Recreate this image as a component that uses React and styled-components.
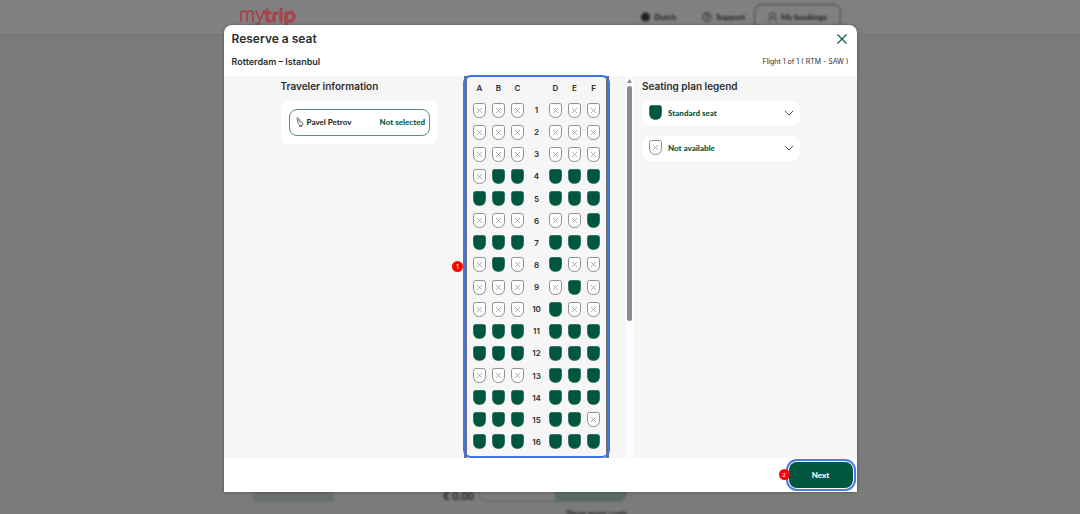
import React, {useState} from "react";
import styled, {createGlobalStyle} from "styled-components"

const GlobalStyle = createGlobalStyle`
    * {
        box-sizing: border-box;
    }
    body {
        margin: 0;
        background-color: #7b7b7b;
        color: #2b2d2e;
        font-family: "Inter", "Liberation Sans", sans-serif;
        font-size: 8px;
    }
    button {
        font-family: inherit;
        font-size: inherit;
        color: inherit;
        padding: 0;
        border: none;
        background: none;
        cursor: pointer;
    }
    h1, h2, p {
        margin: 0;
    }
`

const labelFont = `"Lato", "Liberation Sans", sans-serif`

const Page = styled.div`
    position: relative;
    display: flex;
    flex-direction: column;
    height: 100vh;
    overflow: hidden;
`
const SiteHeader = styled.header`
    height: 35px;
    padding: 0 239px;
    display: flex;
    justify-content: space-between;
    background-color: #808080;
    border-bottom: 1px solid #777;
    font-family: ${labelFont};
`
const Logo = styled.svg`
    width: 58px;
    height: 20px;
    margin-top: 7px;
    filter: blur(0.5px);
`
const SiteNav = styled.nav`
    display: flex;
    gap: 26px;
    margin-top: 4px;
    filter: blur(0.8px);
`
const NavLink = styled.a`
    display: flex;
    align-items: center;
    gap: 4px;
    height: 26px;
    padding: ${props=>props.$boxed ? "0 13px" : "0"};
    margin-left: ${props=>props.$boxed ? "-17px" : "0"};
    border: ${props=>props.$boxed ? "1px solid #444" : "none"};
    border-radius: 8px;
    color: #222;
    font-weight: 900;
    text-decoration: none;
`
const SiteBottom = styled.div`
    display: flex;
    align-items: flex-start;
    justify-content: space-between;
    height: 30px;
    margin-top: auto;
    padding: 0 453px 0 253px;
    font-family: ${labelFont};
`
const GrayBlock = styled.div`
    width: 81px;
    height: 18px;
    background-color: #6a6e6d;
    filter: blur(1px);
`
const PriceBlock = styled.div`
    display: flex;
    flex-direction: column;
    align-items: flex-end;
    filter: blur(1px);
    font-weight: 900;
`
const PriceRow = styled.div`
    display: flex;
    gap: 4px;
    font-size: 11px;
    line-height: 24px;
`
const PricePill = styled.div`
    width: 149px;
    height: 18px;
    border: 1px solid #626262;
    border-radius: 0 0 9px 9px;
    background: linear-gradient(90deg, transparent 52%, #566a62 52%);
`

const Overlay = styled.div`
    position: absolute;
    inset: 0;
    display: flex;
    justify-content: center;
    padding: 25px 0 22px;
`
const Modal = styled.section`
    display: flex;
    flex-direction: column;
    width: 100%;
    max-width: 633px;
    background-color: #fff;
    border-radius: 8px 8px 0 0;
    box-shadow: 0 0 3px rgba(0, 0, 0, 0.4);
`
const ModalHeader = styled.header`
    display: flex;
    flex-direction: column;
    justify-content: space-between;
    height: 51px;
    padding: 6px 8px 8px;
`
const HeaderRow = styled.div`
    display: flex;
    align-items: center;
    justify-content: space-between;
`
const ModalTitle = styled.h1`
    font-size: 12px;
    line-height: 16px;
    font-weight: 600;
`
const Route = styled.h2`
    font-size: 9px;
    line-height: 12px;
    font-weight: 600;
`
const FlightInfo = styled.p`
    font-size: 7px;
    line-height: 12px;
`
const CloseButton = styled.button`
    display: flex;
    padding: 2px;
    color: #00563f;
`

const ModalBody = styled.div`
    flex: 1;
    display: grid;
    grid-template-columns: 1fr 186px 1fr;
    gap: 9px;
    padding: 0 57px;
    background-color: #f6f6f6;
`
const Column = styled.div`
    display: flex;
    flex-direction: column;
    padding-top: 4px;
`
const ColumnTitle = styled.h2`
    font-size: 10px;
    line-height: 12px;
    font-weight: 600;
    margin-bottom: 9px;
`
const Card = styled.div`
    padding: 8px;
    background-color: #fff;
    border-radius: 8px;
`
const Traveler = styled.button`
    display: flex;
    align-items: center;
    width: 100%;
    height: 27px;
    padding: 0 4px 2px 6px;
    border: 1px solid #5c8f80;
    border-radius: 8px;
    font-family: ${labelFont};
    font-weight: 900;
`
const TravelerName = styled.span`
    margin-left: 3px;
`
const TravelerSeat = styled.span`
    margin-left: auto;
    color: #00563f;
`
const LegendItem = styled.button`
    display: flex;
    align-items: center;
    gap: 6px;
    height: 25px;
    margin-bottom: 10px;
    padding: 0 6px 2px 7px;
    background-color: #fff;
    border-radius: 8px;
    color: #00563f;
    font-family: ${labelFont};
    font-weight: 900;
    text-align: left;
`
const LegendLabel = styled.span`
    flex: 1;
`

const Scroller = styled.div`
    display: flex;
`
const ScrollContent = styled.div`
    flex: 1;
    display: flex;
    justify-content: center;
`
const SeatMap = styled.div`
    position: relative;
    display: flex;
    flex-direction: column;
    width: 145px;
    padding: 5px 3px;
    border: solid #6b6e74;
    border-width: 0 3px;
`
const Highlight = styled.div`
    position: absolute;
    inset: -1px -4px 0;
    border: 2px solid #3f74e8;
    border-radius: 8px;
    pointer-events: none;
`
const SeatRow = styled.div`
    flex: ${props=>props.$header ? "0 0 14px" : "1"};
    margin-bottom: ${props=>props.$header ? "4px" : "0"};
    display: grid;
    grid-template-columns: repeat(7, 19px);
    align-items: center;
    justify-content: center;
    justify-items: center;
    font-weight: 600;
`
const SeatButton = styled.button`
    display: flex;
`
const Scrollbar = styled.div`
    display: flex;
    flex-direction: column;
    align-items: center;
    width: 7px;
    padding-top: 3px;
    gap: 3px;
    background-color: #fcfcfc;
`
const ScrollThumb = styled.div`
    width: 5px;
    height: 62%;
    border-radius: 3px;
    background-color: #8a8a88;
`

const ModalFooter = styled.footer`
    display: flex;
    justify-content: flex-end;
    padding: 4px;
`
const NextButton = styled.button`
    position: relative;
    width: 64px;
    height: 26px;
    border-radius: 8px;
    background-color: #00563f;
    color: #fff;
    font-family: ${labelFont};
    font-weight: 900;
    box-shadow: 0 0 0 1px #fff, 0 0 0 3px #4a7be8;
`
const Badge = styled.span`
    position: absolute;
    top: ${props=>props.$top};
    left: ${props=>props.$left};
    width: 11px;
    height: 11px;
    border-radius: 50%;
    background-color: #f00;
    color: #fff;
    font-size: 6px;
    line-height: 11px;
    font-weight: 500;
    text-align: center;
`

const seatPath = "M2.5 .5H10.5Q12.500 .5 12.500 2.500V8Q12.500 14.500 6.500 14.500Q.5 14.500 .5 8V2.500Q.5 .5 2.500 .5Z"

const SeatIcon = ({free}) => (
    <svg width="13" height="15" viewBox="0 0 13 15" aria-hidden="true">
        <path d={seatPath} fill={free ? "#00563f" : "#fff"} stroke={free ? "#00563f" : "#858585"} strokeWidth={free ? 0.6 : 0.9}/>
        {!free && <path d="M4 5L9 10M9 5L4 10" stroke="#8c8c8c" strokeWidth=".7"/>}
    </svg>
)

const ChevronIcon = () => (
    <svg width="10" height="6" viewBox="0 0 10 6" fill="none" aria-hidden="true">
        <path d="M.8 .8L5 5L9.2 .8" stroke="#555" strokeWidth="1"/>
    </svg>
)

// "x" = free seat, "-" = not available
const rows = [
    "------", "------", "------", "-xxxxx", "xxxxxx", "-----x", "xxxxxx", "-x-x--",
    "----x-", "---x--", "xxxxxx", "xxxxxx", "---xxx", "xxxxxx", "xxxxx-", "xxxxxx",
]
const letters = ["A", "B", "C", "D", "E", "F"]

const SeatPlan = () => {
    const [selected, setSelected] = useState(null)
    const seat = (row, i) => {
        const name = `${row + 1}${letters[i]}`
        const free = rows[row][i] === "x"
        return (
            <SeatButton
                key={name}
                aria-label={`Seat ${name}`}
                aria-pressed={selected === name}
                disabled={!free}
                onClick={()=>setSelected(name)}
            >
                <SeatIcon free={free}/>
            </SeatButton>
        )
    }
    return (
        <SeatMap>
            <SeatRow $header>
                {letters.slice(0, 3).map(l => <span key={l}>{l}</span>)}
                <span/>
                {letters.slice(3).map(l => <span key={l}>{l}</span>)}
            </SeatRow>
            {rows.map((_, row) => (
                <SeatRow key={row}>
                    {[0, 1, 2].map(i => seat(row, i))}
                    <span>{row + 1}</span>
                    {[3, 4, 5].map(i => seat(row, i))}
                </SeatRow>
            ))}
            <Highlight/>
            <Badge $top="185px" $left="-15px">1</Badge>
        </SeatMap>
    )
}

const App = () => (
    <Page>
        <GlobalStyle/>
        <SiteHeader>
            <Logo viewBox="0 0 58 20" fill="none" stroke="#a3484d" strokeLinecap="round" strokeLinejoin="round" aria-label="mytrip">
                <path d="M2 14V7Q2 4 5 4T8 7V14M8 7Q8 4 11 4T14 7V14M17 4L21 13M25 4L20 16L17 17" strokeWidth="2"/>
                <path d="M28 3V11Q28 14 31 14M26 6H31M35 14V9Q35 6 38 6M42 6V14M42 2.500V2.600M47 17V6M47 9.500Q47 5.500 51 5.500T55 9.500T51 14T47 9.500" strokeWidth="3.600"/>
            </Logo>
            <SiteNav>
                <NavLink href="#">
                    <svg width="9" height="10" viewBox="0 0 9 10"><circle cx="4.500" cy="5" r="4.500" fill="#222"/></svg>
                    Dutch
                </NavLink>
                <NavLink href="#">
                    <svg width="10" height="10" viewBox="0 0 10 10" fill="none" stroke="#2c2c2c"><circle cx="5" cy="5" r="4.300"/><path d="M3.500 4Q3.500 2.500 5 2.500T6.500 4T5 5.500V7.500"/></svg>
                    Support
                </NavLink>
                <NavLink href="#" $boxed>
                    <svg width="9" height="10" viewBox="0 0 9 10" fill="none" stroke="#2c2c2c"><circle cx="4.500" cy="3.500" r="2.700"/><path d="M.8 9.500Q1 6.500 3 6M6 6Q8 6.500 8.200 9.500"/></svg>
                    My bookings
                </NavLink>
            </SiteNav>
        </SiteHeader>
        <SiteBottom>
            <GrayBlock/>
            <PriceBlock>
                <PriceRow>
                    € 0.00
                    <PricePill/>
                </PriceRow>
                Show more costs
            </PriceBlock>
        </SiteBottom>
        <Overlay>
            <Modal role="dialog" aria-labelledby="modal-title">
                <ModalHeader>
                    <HeaderRow>
                        <ModalTitle id="modal-title">Reserve a seat</ModalTitle>
                        <CloseButton aria-label="Close">
                            <svg width="10" height="10" viewBox="0 0 10 10"><path d="M.5 .5L9.500 9.500M9.500 .5L.5 9.500" stroke="currentColor" strokeWidth="1.100"/></svg>
                        </CloseButton>
                    </HeaderRow>
                    <HeaderRow>
                        <Route>Rotterdam – Istanbul</Route>
                        <FlightInfo>Flight 1 of 1 ( RTM - SAW )</FlightInfo>
                    </HeaderRow>
                </ModalHeader>
                <ModalBody>
                    <Column>
                        <ColumnTitle>Traveler information</ColumnTitle>
                        <Card>
                            <Traveler>
                                <svg width="8" height="10" viewBox="0 0 8 10" fill="none" stroke="#555" strokeWidth=".8" aria-hidden="true">
                                    <path d="M1 1.500Q1 .5 2 .8L3.500 4.500L6 5.500Q7 6 6.800 7L6.500 8.500H3.500L2.300 6.500ZM3 3H4.500M3 9.500H6"/>
                                </svg>
                                <TravelerName>Pavel Petrov</TravelerName>
                                <TravelerSeat>Not selected</TravelerSeat>
                            </Traveler>
                        </Card>
                    </Column>
                    <Scroller>
                        <ScrollContent>
                            <SeatPlan/>
                        </ScrollContent>
                        <Scrollbar>
                            <svg width="5" height="4" viewBox="0 0 5 4"><path d="M2.500 0L5 4H0Z" fill="#8a8a88"/></svg>
                            <ScrollThumb/>
                        </Scrollbar>
                    </Scroller>
                    <Column>
                        <ColumnTitle>Seating plan legend</ColumnTitle>
                        <LegendItem>
                            <SeatIcon free/>
                            <LegendLabel>Standard seat</LegendLabel>
                            <ChevronIcon/>
                        </LegendItem>
                        <LegendItem>
                            <SeatIcon/>
                            <LegendLabel>Not available</LegendLabel>
                            <ChevronIcon/>
                        </LegendItem>
                    </Column>
                </ModalBody>
                <ModalFooter>
                    <NextButton>
                        Next
                        <Badge $top="7px" $left="-10px">2</Badge>
                    </NextButton>
                </ModalFooter>
            </Modal>
        </Overlay>
    </Page>
)

export default App
